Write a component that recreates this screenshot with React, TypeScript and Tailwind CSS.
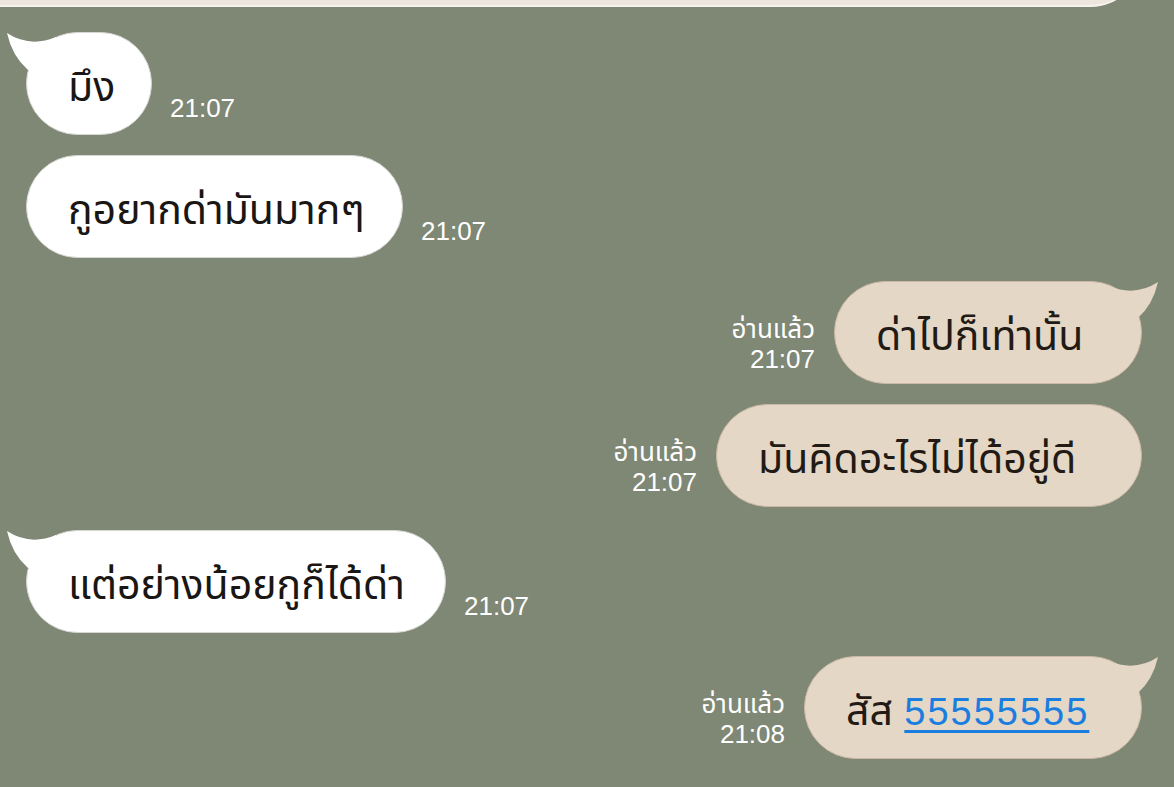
import React from "react";

type Side = "in" | "out";

const FONT = { fontFamily: '"Liberation Sans", "Noto Sans", "Noto Sans Thai", sans-serif' };

function Tail({ side, color }: { side: Side; color: string }) {
  // the little horn on the first bubble of a group
  return (
    <svg
      width="60"
      height="45"
      viewBox="0 0 60 45"
      className={
        side === "in"
          ? "absolute left-[-20px] top-[-2px] pointer-events-none"
          : "absolute right-[-17px] top-[-2px] pointer-events-none -scale-x-100"
      }
    >
      <path d="M1 3 Q24 18 50 7 L50 40 L22 40 Q6 26 1 3 Z" fill={color} />
    </svg>
  );
}

function Bubble({
  side,
  tail,
  width,
  children,
}: {
  side: Side;
  tail?: boolean;
  width: number;
  children: React.ReactNode;
}) {
  const incoming = side === "in";
  return (
    <div className="relative shrink-0" style={{ width }}>
      <div
        className={
          incoming
            ? "h-[103px] rounded-full bg-white border border-[#d6d6d2] pl-[41px] flex items-center text-[41px] text-[#1a1614]"
            : "h-[103px] rounded-full bg-[#e4d7c6] border border-[#cbb9a5] pl-[41px] flex items-center text-[41px] text-[#221a15]"
        }
        style={FONT}
      >
        <span className="leading-none pt-[8px] whitespace-nowrap">{children}</span>
      </div>
      {tail && <Tail side={side} color={incoming ? "#ffffff" : "#e4d7c6"} />}
    </div>
  );
}

function Incoming({
  text,
  time,
  tail,
  mt,
  width,
}: {
  text: string;
  time: string;
  tail?: boolean;
  mt: string;
  width: number;
}) {
  return (
    <div className={`flex items-end gap-[18px] pl-[26px] ${mt}`}>
      <Bubble side="in" tail={tail} width={width}>
        {text}
      </Bubble>
      <div className="text-[26px] leading-[30px] text-white pb-[12px]" style={FONT}>
        {time}
      </div>
    </div>
  );
}

function Outgoing({
  children,
  time,
  tail,
  mt,
  width,
}: {
  children: React.ReactNode;
  time: string;
  tail?: boolean;
  mt: string;
  width: number;
}) {
  return (
    <div className={`flex items-end justify-end gap-[19px] pr-[32px] ${mt}`}>
      <div className="flex flex-col items-end text-[26px] leading-[30px] text-white pb-[10px]" style={FONT}>
        <span>อ่านแล้ว</span>
        <span>{time}</span>
      </div>
      <Bubble side="out" tail={tail} width={width}>
        {children}
      </Bubble>
    </div>
  );
}

export default function App() {
  return (
    <div className="w-[1174px] h-[787px] overflow-hidden bg-[#7f8775] flex flex-col">
      {/* bottom edge of the previous message, scrolled off the top */}
      <div className="h-[7px] overflow-hidden shrink-0">
        <div className="ml-[-60px] w-[1202px] h-[103px] mt-[-96px] rounded-full bg-[#ece6dd] border-b-2 border-[#f7f4ef]" />
      </div>

      <Incoming mt="mt-[25px]" width={126} tail text="มึง" time="21:07" />
      <Incoming mt="mt-[20px]" width={377} text="กูอยากด่ามันมากๆ" time="21:07" />

      <Outgoing mt="mt-[23px]" width={308} tail time="21:07">
        ด่าไปก็เท่านั้น
      </Outgoing>
      <Outgoing mt="mt-[20px]" width={426} time="21:07">
        มันคิดอะไรไม่ได้อยู่ดี
      </Outgoing>

      <Incoming mt="mt-[23px]" width={420} tail text="แต่อย่างน้อยกูก็ได้ด่า" time="21:07" />

      <Outgoing mt="mt-[23px]" width={338} tail time="21:08">
        สัส{" "}
        <span className="text-[38px] tracking-[2px] text-[#1a7ee0] underline decoration-[3px] underline-offset-[5px]">
          55555555
        </span>
      </Outgoing>
    </div>
  );
}
